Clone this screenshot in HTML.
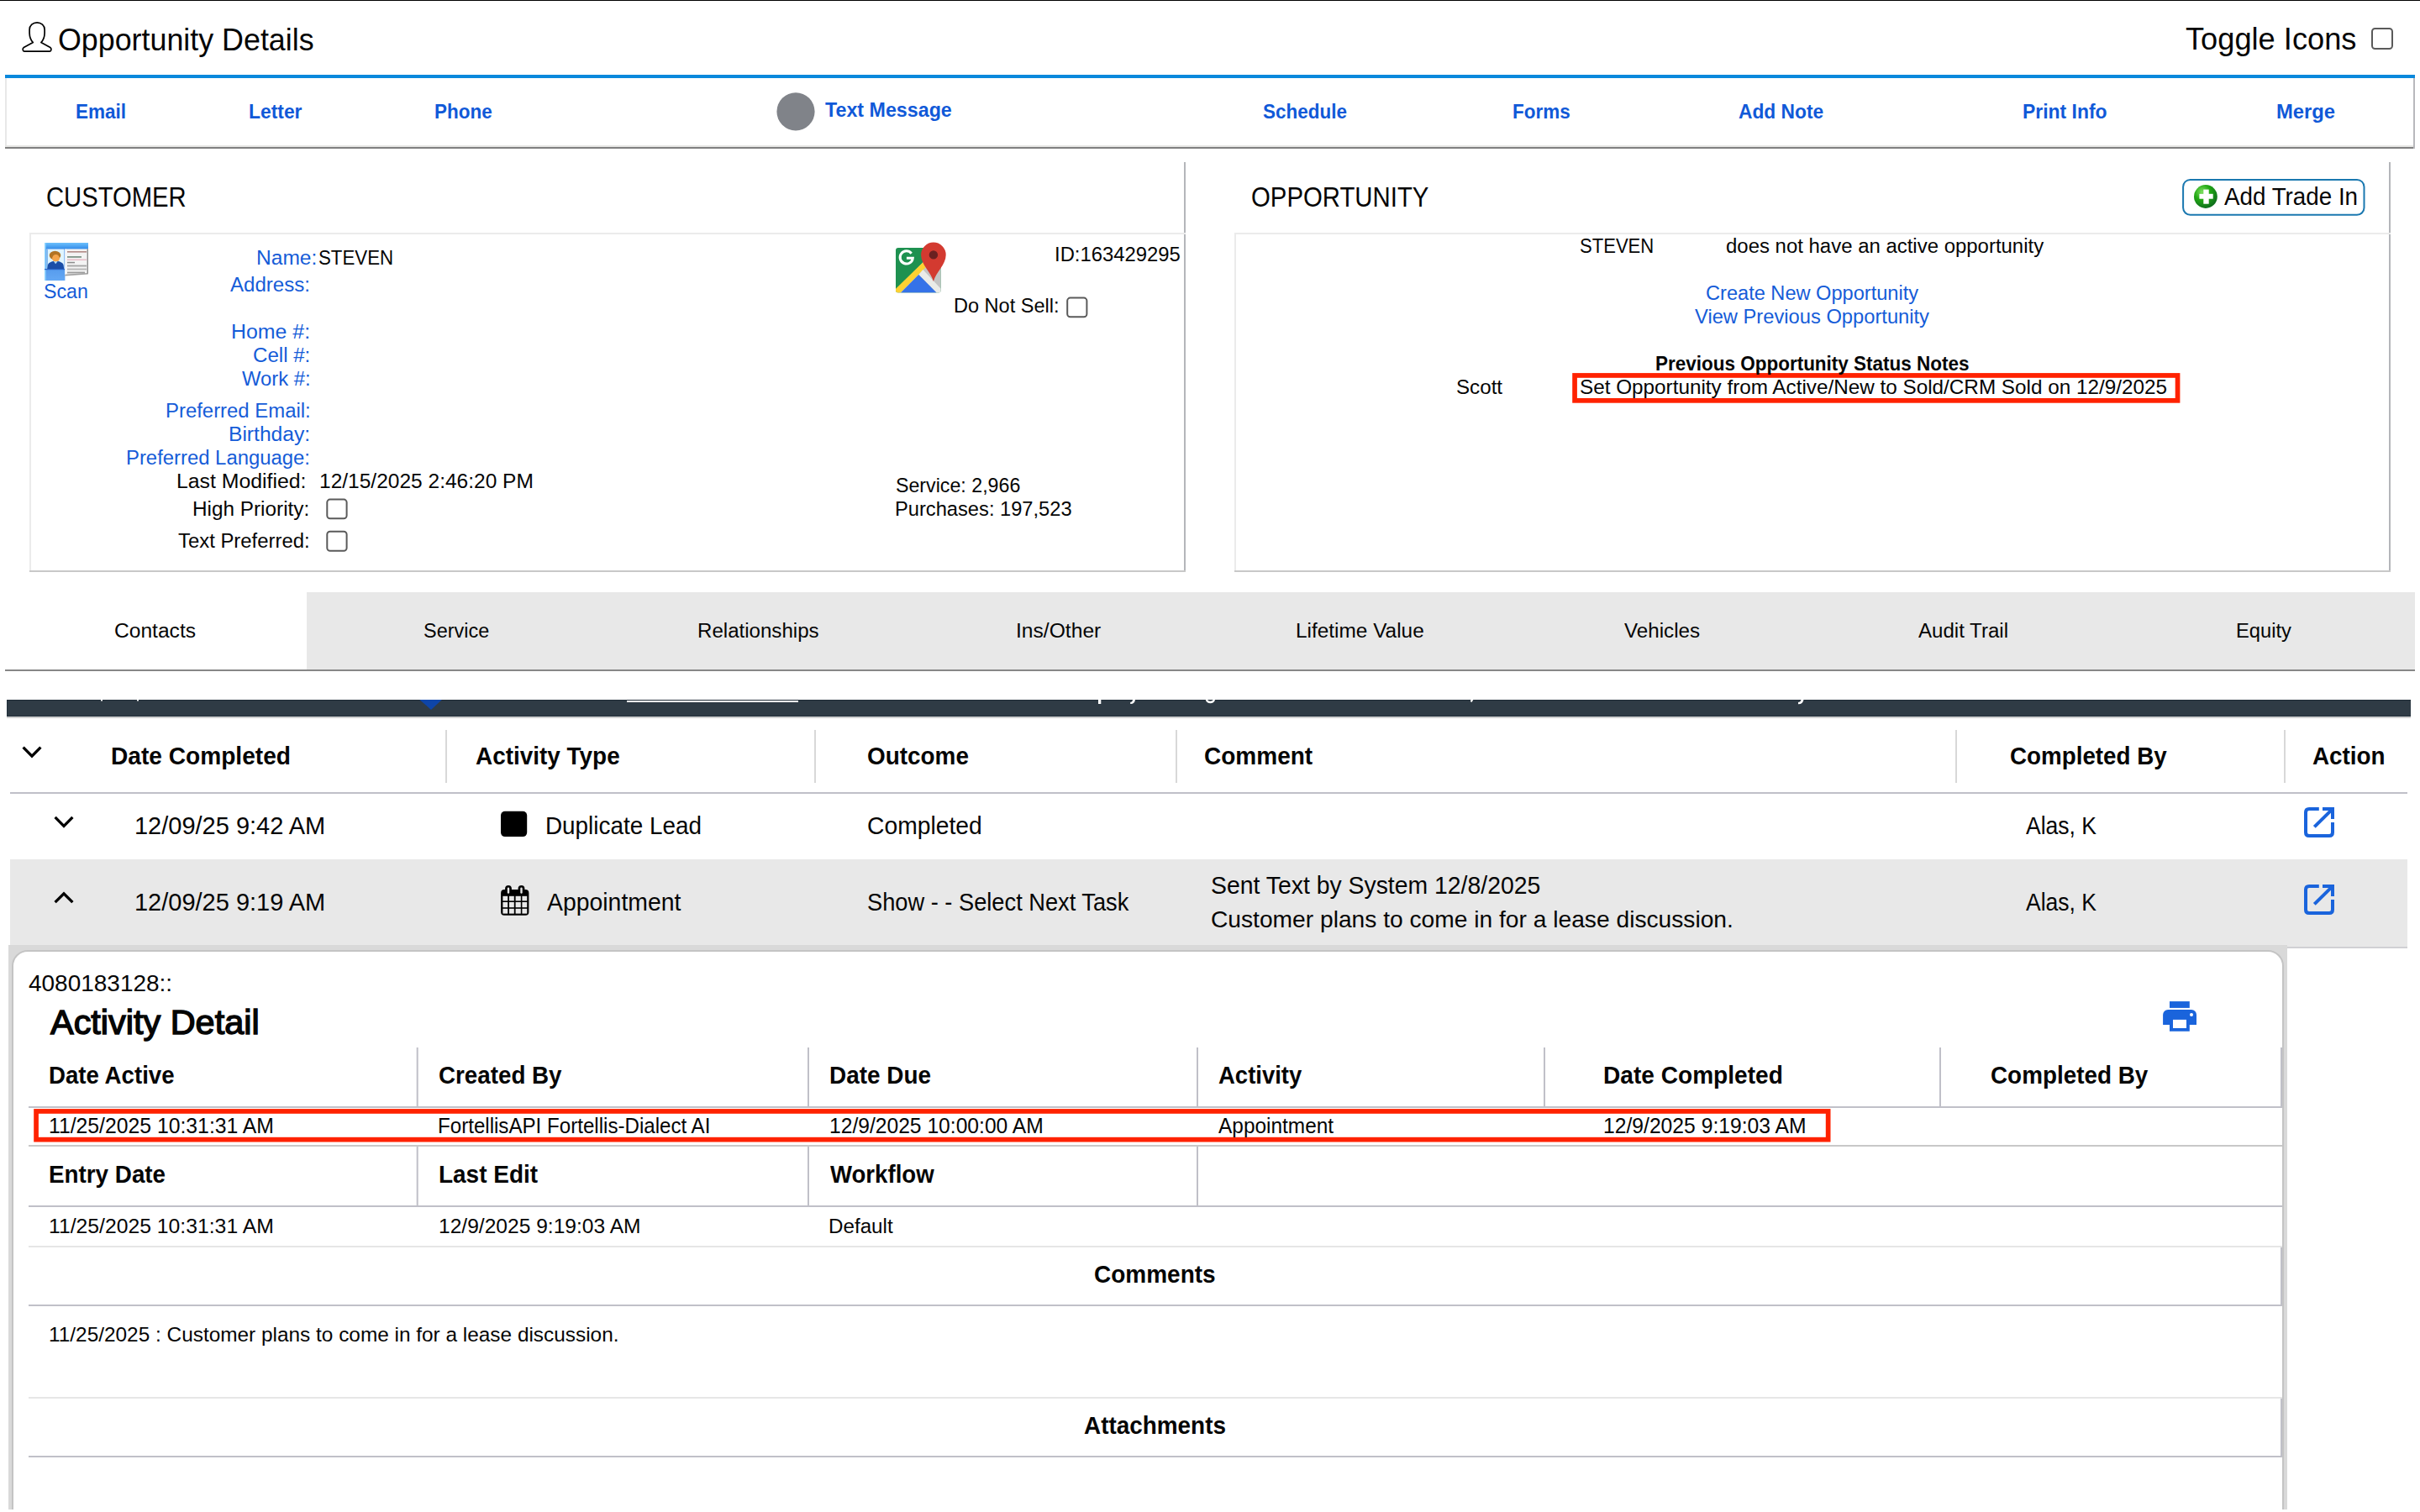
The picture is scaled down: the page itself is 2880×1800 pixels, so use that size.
<!DOCTYPE html>
<html><head><meta charset="utf-8"><style>
html,body{margin:0;padding:0;background:#fff;}
body{width:2880px;height:1800px;position:relative;overflow:hidden;font-family:"Liberation Sans",sans-serif;}
.t{position:absolute;white-space:pre;transform-origin:0 0;}
.b{position:absolute;}
</style></head><body>
<svg class="b" style="left:0;top:0" width="2880" height="1800" viewBox="0 0 2880 1800">
<defs>
 <radialGradient id="gp" cx="0.35" cy="0.3" r="0.75"><stop offset="0" stop-color="#7ee060"/><stop offset="0.45" stop-color="#22a814"/><stop offset="1" stop-color="#0c6a1c"/></radialGradient>
 <linearGradient id="scanbg" x1="0" y1="0" x2="0" y2="1"><stop offset="0" stop-color="#3e9af0"/><stop offset="1" stop-color="#5aa0f0"/></linearGradient>
</defs>
<!-- top line -->
<rect x="0" y="0" width="2880" height="1" fill="#000"/>
<!-- person icon -->
<path d="M39.3,50.6 C36.3,47.3 35.2,43.5 35.1,39.4 L35.1,35.3 C35.1,30.2 39.2,26.9 44.1,26.9 C49,26.9 53.1,30.2 53.1,35.3 L53.1,39.4 C53,43.5 51.9,47.3 48.9,50.6 L59.8,56.6 C61.6,57.7 61.2,61.1 59.2,61.1 L28.9,61.1 C26.9,61.1 26.5,57.7 28.3,56.6 Z" fill="none" stroke="#000" stroke-width="1.7" stroke-linejoin="round"/>
<!-- toggle checkbox -->
<rect x="2823" y="34" width="24" height="24" rx="3.5" fill="#fff" stroke="#5a5a5a" stroke-width="2"/>
<!-- action bar -->
<rect x="6" y="89" width="2868" height="4" fill="#0a88dc"/>
<rect x="6" y="93" width="2" height="82" fill="#e8e8e8"/>
<rect x="6" y="173" width="2868" height="2" fill="#e6e6e4"/>
<rect x="6" y="175" width="2868" height="2" fill="#808080"/>
<rect x="2872" y="93" width="2" height="84" fill="#b8b8bc"/>
<circle cx="947" cy="132.8" r="22.6" fill="#808389"/>
<!-- customer panel -->
<rect x="1409" y="193" width="2" height="488" fill="#b4b6ba"/>
<rect x="35" y="277" width="1376" height="2" fill="#ebebeb"/>
<rect x="35" y="277" width="2" height="404" fill="#ebebeb"/>
<rect x="35" y="679" width="1376" height="2" fill="#c8c8c8"/>
<!-- opportunity panel -->
<rect x="2843" y="193" width="2" height="488" fill="#b4b6ba"/>
<rect x="1469" y="277" width="1376" height="2" fill="#ebebeb"/>
<rect x="1469" y="277" width="2" height="404" fill="#ebebeb"/>
<rect x="1469" y="679" width="1376" height="2" fill="#c8c8c8"/>
<!-- scan icon -->
<g>
 <linearGradient id="scanhdr" x1="0" y1="0" x2="0" y2="1"><stop offset="0" stop-color="#6cc0fc"/><stop offset="1" stop-color="#2f88e8"/></linearGradient>
 <linearGradient id="scanlow" x1="0" y1="0" x2="0" y2="1"><stop offset="0" stop-color="#3f86e2"/><stop offset="1" stop-color="#64a8f4"/></linearGradient>
 <rect x="53" y="289" width="52" height="8" fill="url(#scanhdr)"/>
 <rect x="53" y="296" width="25" height="38" fill="url(#scanlow)"/>
 <rect x="53" y="289" width="1.6" height="45" fill="#8fd4ff"/>
 <rect x="55.5" y="296.5" width="21" height="23.5" fill="#dff4ff"/>
 <rect x="55.5" y="296.5" width="1.5" height="23.5" fill="#7fb8ee"/>
 <ellipse cx="65.5" cy="304" rx="6.8" ry="5.2" fill="#b27424"/>
 <circle cx="66.5" cy="307.5" r="4.4" fill="#f6a64c"/>
 <path d="M56.2,320 L57,315 C58,312.5 61.5,311.2 64,311 L66,313.5 L68.5,311 C71,311.2 74.5,312.5 75.5,315 L76.2,320 Z" fill="#1b4ea8"/>
 <path d="M64,311.2 L66.2,314.2 L68.5,311.2 Z" fill="#a8d8f8"/>
 <rect x="53" y="320" width="24.5" height="1.2" fill="#2a64c8"/>
 <rect x="77.4" y="296.4" width="27.4" height="31.4" fill="#f3f3f3"/>
 <rect x="77.4" y="296.4" width="1.2" height="31.4" fill="#ffffff"/>
 <rect x="80" y="299" width="23" height="1.6" fill="#b28a86"/>
 <rect x="80" y="305" width="17" height="1.8" fill="#7f9488"/>
 <rect x="80" y="308.6" width="23" height="1.3" fill="#e6b4c0"/>
 <rect x="80" y="311.8" width="9" height="1.5" fill="#8c8c8c"/>
 <rect x="80" y="315.6" width="23" height="1.8" fill="#a4a4a4"/>
 <rect x="80" y="319.6" width="23" height="1.8" fill="#b4b4b4"/>
 <rect x="80" y="323.6" width="21" height="1.8" fill="#9c9c9c"/>
 <rect x="103.6" y="296.4" width="1.4" height="31" fill="#8a8a8a"/>
 <path d="M77.4,327.8 L105,325.5 L105,334 L77.4,334 Z" fill="#fff"/>
 <path d="M77.4,326.8 L104.8,325 L104.8,326.6 L77.4,328.6 Z" fill="#7a7a7a" opacity="0.7"/>
</g>
<!-- maps icon -->
<g>
 <clipPath id="mapclip"><rect x="1066" y="294.9" width="53.7" height="53.7" rx="3"/></clipPath>
 <g clip-path="url(#mapclip)">
  <rect x="1066" y="294.9" width="53.7" height="53.7" fill="#1e9150"/>
  <polygon points="1098.4,312.2 1119.7,294.9 1119.7,348.6 1066,348.6" fill="#c4c4c4"/>
  <polygon points="1066,343.7 1098.4,312.2 1101.7,318.3 1071.6,348.6 1066,348.6" fill="#fdd132"/>
  <polygon points="1093.3,327 1098.4,321 1119.7,343.7 1119.7,348.6 1114.6,348.6" fill="#eaebe8"/>
  <polygon points="1072,348.6 1093.3,327 1114.6,348.6" fill="#3572e8"/>
 </g>
 <path d="M1078.5,299.5 m6.2,2.2 a7.6,7.6 0 1 0 1.6,5.6 l-7.4,0" fill="none" stroke="#fff" stroke-width="3"/>
 <path d="M1110.9,334.9 C1108,324 1096.1,315 1096.1,303.4 A14.8,14.8 0 1 1 1125.7,303.4 C1125.7,315 1113.8,324 1110.9,334.9 Z" fill="#d33a30"/>
 <circle cx="1110.9" cy="303.4" r="5.2" fill="#6a2020"/>
</g>
<!-- checkboxes -->
<rect x="1270.2" y="354.6" width="23.2" height="22.7" rx="3.5" fill="#fff" stroke="#5a5a5a" stroke-width="2"/>
<rect x="389.3" y="594.6" width="23.3" height="22.7" rx="3.5" fill="#fff" stroke="#5a5a5a" stroke-width="2"/>
<rect x="389.3" y="632.7" width="23.3" height="23" rx="3.5" fill="#fff" stroke="#5a5a5a" stroke-width="2"/>
<!-- red box opportunity -->
<rect x="1874.05" y="446.95" width="717.5" height="29.9" fill="none" stroke="#ff2200" stroke-width="5.7"/>
<!-- add trade in button -->
<rect x="2598.1" y="213.9" width="215.4" height="41.9" rx="8.5" fill="#fff" stroke="#1a78b0" stroke-width="2"/>
<circle cx="2624.9" cy="234" r="13.9" fill="url(#gp)"/>
<rect x="2617.4" y="230.8" width="16.3" height="5.9" fill="#fff"/>
<rect x="2622.3" y="225.6" width="6.4" height="17.1" fill="#fff"/>
<!-- tabs -->
<rect x="365" y="705" width="2509" height="92" fill="#e8e8e8"/>
<rect x="6" y="797" width="2868" height="2" fill="#878787"/>
<!-- dark bar -->
<rect x="8" y="833" width="2861" height="20" fill="#2f3b45"/>
<rect x="8" y="833" width="2861" height="1" fill="#1f2b36"/>
<rect x="8" y="852" width="2861" height="1" fill="#22303b"/>
<rect x="8" y="833" width="1" height="20" fill="#22303b"/>
<rect x="8" y="853" width="2861" height="1" fill="#d6d6d6"/>
<rect x="8" y="854" width="2861" height="1" fill="#cccccc"/>
<rect x="746" y="834" width="204" height="2" fill="#fff"/>
<polygon points="499.4,833 525.9,833 513,845" fill="#0e45a8"/>
<g fill="#fff">
 <rect x="120" y="833" width="2" height="1.5"/>
 <rect x="163" y="833" width="2" height="1.5"/>
 <rect x="1307" y="833" width="3.3" height="5"/>
 <path d="M1348,833 L1351,833 C1350.5,836.5 1348.5,838.2 1345.2,838 L1345.2,836 C1347,836 1347.7,835 1348,833 Z"/>
 <path d="M1434.8,833 L1437.2,833 C1438,835.2 1442.5,835.2 1443.6,833 L1446,833 C1444.8,838.8 1436,838.8 1434.8,833 Z"/>
 <path d="M1750.5,833 L1753.3,833 L1751.5,836 L1749.8,835 Z"/>
 <path d="M2143.5,833 L2146.5,833 C2145.8,836.8 2143.5,838.5 2140,838.3 L2140,836 C2142,836 2143,835 2143.5,833 Z"/>
</g>
<!-- activity header separators -->
<rect x="530" y="869" width="2" height="63" fill="#d8d8d8"/>
<rect x="969" y="869" width="2" height="63" fill="#d8d8d8"/>
<rect x="1399" y="869" width="2" height="63" fill="#d8d8d8"/>
<rect x="2327" y="869" width="2" height="63" fill="#d8d8d8"/>
<rect x="2718" y="869" width="2" height="63" fill="#d8d8d8"/>
<rect x="12" y="943" width="2853" height="2" fill="#c0c0c8"/>
<path d="M27.6,889.7 L38,900.1 L48.4,889.7" fill="none" stroke="#000" stroke-width="3.3"/>
<path d="M65.6,972.9 L76,983.3 L86.4,972.9" fill="none" stroke="#000" stroke-width="3.3"/>
<!-- row 2 bg -->
<rect x="12" y="1023" width="2853" height="104" fill="#e8e8e8"/>
<rect x="12" y="1127" width="2853" height="2" fill="#d0d0d4"/>
<path d="M65.6,1074.2 L76,1063.8 L86.4,1074.2" fill="none" stroke="#000" stroke-width="3.3"/>
<!-- black square -->
<rect x="596" y="965.8" width="31.2" height="30.3" rx="5" fill="#000"/>
<!-- calendar -->
<g>
 <path d="M596.1,1063 a4,4 0 0 1 4,-4 H625.4 a4,4 0 0 1 4,4 V1085.8 a4,4 0 0 1 -4,4 H600.1 a4,4 0 0 1 -4,-4 Z" fill="#000"/>
 <g fill="#e8e8e8">
  <rect x="598.4" y="1066.8" width="5.8" height="5.6"/><rect x="606" y="1066.8" width="5.8" height="5.6"/><rect x="613.6" y="1066.8" width="6.2" height="5.6"/><rect x="621.4" y="1066.8" width="5.8" height="5.6"/>
  <rect x="598.4" y="1074" width="5.8" height="6.2"/><rect x="606" y="1074" width="5.8" height="6.2"/><rect x="613.6" y="1074" width="6.2" height="6.2"/><rect x="621.4" y="1074" width="5.8" height="6.2"/>
  <rect x="598.4" y="1081.8" width="5.8" height="5.8"/><rect x="606" y="1081.8" width="5.8" height="5.8"/><rect x="613.6" y="1081.8" width="6.2" height="5.8"/><rect x="621.4" y="1081.8" width="5.8" height="5.8"/>
 </g>
 <rect x="601.1" y="1053.9" width="7.8" height="12" rx="3.9" fill="#000"/>
 <rect x="616.6" y="1053.9" width="7.8" height="12" rx="3.9" fill="#000"/>
 <rect x="603.8" y="1056.6" width="2.4" height="7.1" rx="1.2" fill="#e8e8e8"/>
 <rect x="619.3" y="1056.6" width="2.4" height="7.1" rx="1.2" fill="#e8e8e8"/>
</g>
<!-- edit icons -->
<g fill="none" stroke="#1a64dc" stroke-width="4">
 <path d="M2759.8,963 H2748 Q2744,963 2744,967 V991 Q2744,995 2748,995 H2772 Q2776,995 2776,991 V978.9"/>
 <path d="M2764,963 H2776 V974.9"/>
 <path d="M2754.3,984.4 L2774.6,964.4"/>
</g>
<g fill="none" stroke="#1a64dc" stroke-width="4">
 <path d="M2759.8,1055 H2748 Q2744,1055 2744,1059 V1083 Q2744,1087 2748,1087 H2772 Q2776,1087 2776,1083 V1070.9"/>
 <path d="M2764,1055 H2776 V1066.9"/>
 <path d="M2754.3,1076.4 L2774.6,1056.4"/>
</g>
<!-- detail container -->
<rect x="10" y="1125" width="2712" height="672" fill="#d9d9d9"/>
<path d="M15,1797 V1150 a18,18 0 0 1 18,-18 H2699 a18,18 0 0 1 18,18 V1797" fill="#fff" stroke="#c4c4c4" stroke-width="2"/>
<!-- print icon -->
<g fill="#1a64dc">
 <rect x="2582" y="1192.1" width="23.8" height="7.8"/>
 <path d="M2574.1,1220 V1208 a6,6 0 0 1 6,-6 H2608 a6,6 0 0 1 6,6 V1220 H2605.8 V1227.8 H2582 V1220 Z"/>
</g>
<rect x="2586" y="1213.9" width="16" height="10.1" fill="#fff"/>
<circle cx="2608" cy="1208" r="2" fill="#fff"/>
<!-- detail table lines -->
<g fill="#c0c0c8">
 <rect x="495.7" y="1247" width="2" height="71"/>
 <rect x="961" y="1247" width="2" height="71"/>
 <rect x="1424" y="1247" width="2" height="71"/>
 <rect x="1837" y="1247" width="2" height="71"/>
 <rect x="2308" y="1247" width="2" height="71"/>
 <rect x="2714" y="1247" width="2" height="71"/>
 <rect x="34" y="1317" width="2682" height="2"/>
 <rect x="495.7" y="1364" width="2" height="71"/>
 <rect x="961" y="1364" width="2" height="71"/>
 <rect x="1424" y="1364" width="2" height="71"/>
 <rect x="34" y="1435" width="2682" height="2"/>
 <rect x="34" y="1553" width="2682" height="2"/>
 <rect x="2714" y="1484" width="2" height="70"/>
 <rect x="2714" y="1664" width="2" height="70"/>
 <rect x="34" y="1733" width="2682" height="2"/>
</g>
<rect x="34" y="1363" width="2682" height="2" fill="#c8c8c8"/>
<rect x="34" y="1483" width="2682" height="2" fill="#e6e6e6"/>
<rect x="34" y="1663" width="2682" height="2" fill="#e6e6e6"/>
<!-- red box detail -->
<rect x="43.05" y="1322.95" width="2132.6" height="33.7" fill="none" stroke="#ff2200" stroke-width="5.7"/>
</svg>

<div class="t" style="left:69.34px;top:28.70px;font-size:37.25px;line-height:37px;font-weight:400;color:#050505;transform:scaleX(0.9615)">Opportunity Details</div>
<div class="t" style="left:2600.80px;top:27.80px;font-size:37.25px;line-height:37px;font-weight:400;color:#050505;transform:scaleX(0.9725)">Toggle Icons</div>
<div class="t" style="left:90.38px;top:120.90px;font-size:24.5px;line-height:24px;font-weight:700;color:#1059d8;transform:scaleX(0.9188)">Email</div>
<div class="t" style="left:296.07px;top:120.90px;font-size:24.5px;line-height:24px;font-weight:700;color:#1059d8;transform:scaleX(0.9329)">Letter</div>
<div class="t" style="left:517.38px;top:120.90px;font-size:24.5px;line-height:24px;font-weight:700;color:#1059d8;transform:scaleX(0.9176)">Phone</div>
<div class="t" style="left:1502.50px;top:120.90px;font-size:24.5px;line-height:24px;font-weight:700;color:#1059d8;transform:scaleX(0.9169)">Schedule</div>
<div class="t" style="left:1800.28px;top:120.90px;font-size:24.5px;line-height:24px;font-weight:700;color:#1059d8;transform:scaleX(0.9174)">Forms</div>
<div class="t" style="left:2068.90px;top:120.90px;font-size:24.5px;line-height:24px;font-weight:700;color:#1059d8;transform:scaleX(0.9293)">Add Note</div>
<div class="t" style="left:2406.86px;top:120.90px;font-size:24.5px;line-height:24px;font-weight:700;color:#1059d8;transform:scaleX(0.9358)">Print Info</div>
<div class="t" style="left:2708.53px;top:120.90px;font-size:24.5px;line-height:24px;font-weight:700;color:#1059d8;transform:scaleX(0.9712)">Merge</div>
<div class="t" style="left:981.80px;top:118.80px;font-size:24.5px;line-height:24px;font-weight:700;color:#1059d8;transform:scaleX(0.9492)">Text Message</div>
<div class="t" style="left:54.71px;top:217.80px;font-size:32.75px;line-height:33px;font-weight:400;color:#050505;transform:scaleX(0.8922)">CUSTOMER</div>
<div class="t" style="left:304.50px;top:294.80px;font-size:24.5px;line-height:24px;font-weight:400;color:#155cd8;transform:scaleX(1.0021)">Name:</div>
<div class="t" style="left:379.39px;top:294.80px;font-size:24.5px;line-height:24px;font-weight:400;color:#050505;transform:scaleX(0.9095)">STEVEN</div>
<div class="t" style="left:274.30px;top:326.00px;font-size:24.75px;line-height:25px;font-weight:400;color:#155cd8;transform:scaleX(0.9729)">Address:</div>
<div class="t" style="left:275.27px;top:382.80px;font-size:24.5px;line-height:24px;font-weight:400;color:#155cd8;transform:scaleX(1.0159)">Home #:</div>
<div class="t" style="left:301.03px;top:410.00px;font-size:24.75px;line-height:25px;font-weight:400;color:#155cd8;transform:scaleX(0.9736)">Cell #:</div>
<div class="t" style="left:287.70px;top:438.90px;font-size:24.5px;line-height:24px;font-weight:400;color:#155cd8;transform:scaleX(0.9714)">Work #:</div>
<div class="t" style="left:196.57px;top:476.00px;font-size:24.75px;line-height:25px;font-weight:400;color:#155cd8;transform:scaleX(0.9661)">Preferred Email:</div>
<div class="t" style="left:272.31px;top:504.00px;font-size:24.75px;line-height:25px;font-weight:400;color:#155cd8;transform:scaleX(0.9937)">Birthday:</div>
<div class="t" style="left:150.37px;top:532.00px;font-size:24.75px;line-height:25px;font-weight:400;color:#155cd8;transform:scaleX(0.9643)">Preferred Language:</div>
<div class="t" style="left:209.79px;top:560.20px;font-size:24.75px;line-height:25px;font-weight:400;color:#050505;transform:scaleX(1.0026)">Last Modified:</div>
<div class="t" style="left:380.41px;top:560.20px;font-size:24.75px;line-height:25px;font-weight:400;color:#050505;transform:scaleX(0.9905)">12/15/2025 2:46:20 PM</div>
<div class="t" style="left:229.23px;top:593.00px;font-size:24.75px;line-height:25px;font-weight:400;color:#050505;transform:scaleX(0.9827)">High Priority:</div>
<div class="t" style="left:211.80px;top:631.20px;font-size:24.75px;line-height:25px;font-weight:400;color:#050505;transform:scaleX(0.9649)">Text Preferred:</div>
<div class="t" style="left:52.21px;top:334.90px;font-size:23.5px;line-height:24px;font-weight:400;color:#155cd8;transform:scaleX(0.9865)">Scan</div>
<div class="t" style="left:1254.81px;top:290.80px;font-size:24.0px;line-height:24px;font-weight:400;color:#050505;transform:scaleX(0.9936)">ID:163429295</div>
<div class="t" style="left:1135.48px;top:352.10px;font-size:24.5px;line-height:24px;font-weight:400;color:#050505;transform:scaleX(0.9605)">Do Not Sell:</div>
<div class="t" style="left:1065.72px;top:565.70px;font-size:23.75px;line-height:24px;font-weight:400;color:#050505;transform:scaleX(0.9767)">Service: 2,966</div>
<div class="t" style="left:1064.77px;top:593.90px;font-size:24.5px;line-height:24px;font-weight:400;color:#050505;transform:scaleX(0.9665)">Purchases: 197,523</div>
<div class="t" style="left:1488.80px;top:217.80px;font-size:32.75px;line-height:33px;font-weight:400;color:#050505;transform:scaleX(0.8958)">OPPORTUNITY</div>
<div class="t" style="left:1879.81px;top:279.80px;font-size:24.75px;line-height:25px;font-weight:400;color:#050505;transform:scaleX(0.8913)">STEVEN</div>
<div class="t" style="left:2054.33px;top:279.80px;font-size:24.75px;line-height:25px;font-weight:400;color:#050505;transform:scaleX(0.9677)">does not have an active opportunity</div>
<div class="t" style="left:2029.63px;top:336.70px;font-size:24.25px;line-height:24px;font-weight:400;color:#155cd8;transform:scaleX(0.9727)">Create New Opportunity</div>
<div class="t" style="left:2017.20px;top:364.80px;font-size:24.5px;line-height:24px;font-weight:400;color:#155cd8;transform:scaleX(0.9678)">View Previous Opportunity</div>
<div class="t" style="left:1970.08px;top:420.70px;font-size:24.5px;line-height:24px;font-weight:700;color:#050505;transform:scaleX(0.9176)">Previous Opportunity Status Notes</div>
<div class="t" style="left:1732.69px;top:448.60px;font-size:24.0px;line-height:24px;font-weight:400;color:#050505;transform:scaleX(1.0070)">Scott</div>
<div class="t" style="left:1880.19px;top:448.60px;font-size:24.0px;line-height:24px;font-weight:400;color:#050505;transform:scaleX(1.0114)">Set Opportunity from Active/New to Sold/CRM Sold on 12/9/2025</div>
<div class="t" style="left:2647.00px;top:219.70px;font-size:28.75px;line-height:29px;font-weight:400;color:#050505;transform:scaleX(0.9662)">Add Trade In</div>
<div class="t" style="left:136.45px;top:738.50px;font-size:23.5px;line-height:24px;font-weight:400;color:#050505;transform:scaleX(1.0463)">Contacts</div>
<div class="t" style="left:504.20px;top:738.50px;font-size:23.5px;line-height:24px;font-weight:400;color:#050505;transform:scaleX(0.9975)">Service</div>
<div class="t" style="left:829.68px;top:738.50px;font-size:23.5px;line-height:24px;font-weight:400;color:#050505;transform:scaleX(1.0249)">Relationships</div>
<div class="t" style="left:1208.90px;top:738.50px;font-size:23.5px;line-height:24px;font-weight:400;color:#050505;transform:scaleX(1.0482)">Ins/Other</div>
<div class="t" style="left:1542.36px;top:738.50px;font-size:23.5px;line-height:24px;font-weight:400;color:#050505;transform:scaleX(1.0376)">Lifetime Value</div>
<div class="t" style="left:1933.00px;top:738.50px;font-size:23.5px;line-height:24px;font-weight:400;color:#050505;transform:scaleX(1.0291)">Vehicles</div>
<div class="t" style="left:2282.90px;top:738.50px;font-size:23.5px;line-height:24px;font-weight:400;color:#050505;transform:scaleX(1.0242)">Audit Trail</div>
<div class="t" style="left:2661.19px;top:738.50px;font-size:23.5px;line-height:24px;font-weight:400;color:#050505;transform:scaleX(1.0099)">Equity</div>
<div class="t" style="left:132.04px;top:885.90px;font-size:29.25px;line-height:29px;font-weight:700;color:#050505;transform:scaleX(0.9609)">Date Completed</div>
<div class="t" style="left:566.00px;top:885.90px;font-size:29.25px;line-height:29px;font-weight:700;color:#050505;transform:scaleX(0.9543)">Activity Type</div>
<div class="t" style="left:1032.35px;top:885.90px;font-size:29.25px;line-height:29px;font-weight:700;color:#050505;transform:scaleX(0.9538)">Outcome</div>
<div class="t" style="left:1432.64px;top:885.90px;font-size:29.25px;line-height:29px;font-weight:700;color:#050505;transform:scaleX(0.9579)">Comment</div>
<div class="t" style="left:2392.05px;top:885.90px;font-size:29.25px;line-height:29px;font-weight:700;color:#050505;transform:scaleX(0.9497)">Completed By</div>
<div class="t" style="left:2752.00px;top:885.90px;font-size:29.25px;line-height:29px;font-weight:700;color:#050505;transform:scaleX(0.9520)">Action</div>
<div class="t" style="left:159.88px;top:968.80px;font-size:28.75px;line-height:29px;font-weight:400;color:#050505;transform:scaleX(1.0084)">12/09/25 9:42 AM</div>
<div class="t" style="left:648.86px;top:968.80px;font-size:28.75px;line-height:29px;font-weight:400;color:#050505;transform:scaleX(0.9692)">Duplicate Lead</div>
<div class="t" style="left:1032.32px;top:968.80px;font-size:28.75px;line-height:29px;font-weight:400;color:#050505;transform:scaleX(0.9836)">Completed</div>
<div class="t" style="left:2410.80px;top:968.80px;font-size:28.75px;line-height:29px;font-weight:400;color:#050505;transform:scaleX(0.9230)">Alas, K</div>
<div class="t" style="left:159.88px;top:1060.00px;font-size:28.75px;line-height:29px;font-weight:400;color:#050505;transform:scaleX(1.0084)">12/09/25 9:19 AM</div>
<div class="t" style="left:650.80px;top:1060.00px;font-size:28.75px;line-height:29px;font-weight:400;color:#050505;transform:scaleX(0.9874)">Appointment</div>
<div class="t" style="left:1032.35px;top:1060.00px;font-size:28.75px;line-height:29px;font-weight:400;color:#050505;transform:scaleX(0.9475)">Show - - Select Next Task</div>
<div class="t" style="left:1440.61px;top:1039.80px;font-size:28.75px;line-height:29px;font-weight:400;color:#050505;transform:scaleX(0.9870)">Sent Text by System 12/8/2025</div>
<div class="t" style="left:1440.60px;top:1079.60px;font-size:28.25px;line-height:28px;font-weight:400;color:#050505;transform:scaleX(0.9976)">Customer plans to come in for a lease discussion.</div>
<div class="t" style="left:2410.80px;top:1060.00px;font-size:28.75px;line-height:29px;font-weight:400;color:#050505;transform:scaleX(0.9230)">Alas, K</div>
<div class="t" style="left:34.10px;top:1155.60px;font-size:28.5px;line-height:28px;font-weight:400;color:#050505;transform:scaleX(0.9813)">4080183128::</div>
<div class="t" style="left:59.60px;top:1197.20px;font-size:39.75px;line-height:40px;font-weight:400;color:#050505;transform:scaleX(1.0421);-webkit-text-stroke:1.4px #050505">Activity Detail</div>
<div class="t" style="left:57.95px;top:1266.10px;font-size:29.25px;line-height:29px;font-weight:700;color:#050505;transform:scaleX(0.9453)">Date Active</div>
<div class="t" style="left:522.15px;top:1266.10px;font-size:29.25px;line-height:29px;font-weight:700;color:#050505;transform:scaleX(0.9490)">Created By</div>
<div class="t" style="left:986.65px;top:1266.10px;font-size:29.25px;line-height:29px;font-weight:700;color:#050505;transform:scaleX(0.9545)">Date Due</div>
<div class="t" style="left:1449.60px;top:1266.10px;font-size:29.25px;line-height:29px;font-weight:700;color:#050505;transform:scaleX(0.9399)">Activity</div>
<div class="t" style="left:1908.34px;top:1266.10px;font-size:29.25px;line-height:29px;font-weight:700;color:#050505;transform:scaleX(0.9604)">Date Completed</div>
<div class="t" style="left:2369.45px;top:1266.10px;font-size:29.25px;line-height:29px;font-weight:700;color:#050505;transform:scaleX(0.9522)">Completed By</div>
<div class="t" style="left:58.11px;top:1327.90px;font-size:25.0px;line-height:25px;font-weight:400;color:#050505;transform:scaleX(0.9902)">11/25/2025 10:31:31 AM</div>
<div class="t" style="left:521.17px;top:1327.90px;font-size:25.0px;line-height:25px;font-weight:400;color:#050505;transform:scaleX(0.9648)">FortellisAPI Fortellis-Dialect AI</div>
<div class="t" style="left:986.61px;top:1327.90px;font-size:25.0px;line-height:25px;font-weight:400;color:#050505;transform:scaleX(0.9852)">12/9/2025 10:00:00 AM</div>
<div class="t" style="left:1449.60px;top:1327.90px;font-size:25.0px;line-height:25px;font-weight:400;color:#050505;transform:scaleX(0.9770)">Appointment</div>
<div class="t" style="left:1908.31px;top:1327.90px;font-size:25.0px;line-height:25px;font-weight:400;color:#050505;transform:scaleX(0.9873)">12/9/2025 9:19:03 AM</div>
<div class="t" style="left:58.14px;top:1384.00px;font-size:29.0px;line-height:29px;font-weight:700;color:#050505;transform:scaleX(0.9589)">Entry Date</div>
<div class="t" style="left:522.14px;top:1384.00px;font-size:29.0px;line-height:29px;font-weight:700;color:#050505;transform:scaleX(0.9639)">Last Edit</div>
<div class="t" style="left:987.60px;top:1384.00px;font-size:29.0px;line-height:29px;font-weight:700;color:#050505;transform:scaleX(0.9509)">Workflow</div>
<div class="t" style="left:58.10px;top:1447.00px;font-size:24.75px;line-height:25px;font-weight:400;color:#050505;transform:scaleX(0.9995)">11/25/2025 10:31:31 AM</div>
<div class="t" style="left:522.11px;top:1447.00px;font-size:24.75px;line-height:25px;font-weight:400;color:#050505;transform:scaleX(0.9932)">12/9/2025 9:19:03 AM</div>
<div class="t" style="left:985.65px;top:1447.00px;font-size:24.75px;line-height:25px;font-weight:400;color:#050505;transform:scaleX(0.9772)">Default</div>
<div class="t" style="left:1301.73px;top:1503.00px;font-size:28.75px;line-height:29px;font-weight:700;color:#050505;transform:scaleX(0.9736)">Comments</div>
<div class="t" style="left:58.30px;top:1576.90px;font-size:24.5px;line-height:24px;font-weight:400;color:#050505;transform:scaleX(0.9951)">11/25/2025 : Customer plans to come in for a lease discussion.</div>
<div class="t" style="left:1289.50px;top:1683.00px;font-size:28.75px;line-height:29px;font-weight:700;color:#050505;transform:scaleX(0.9703)">Attachments</div>
</body></html>
